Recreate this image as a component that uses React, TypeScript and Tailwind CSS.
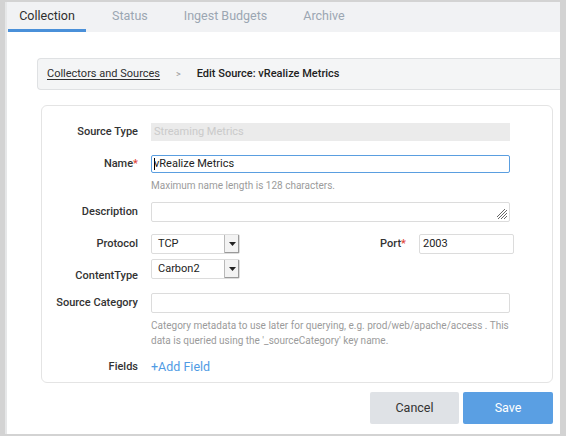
import React from "react";

function Select({ value }: { value: string }) {
  return (
    <div className="flex h-[20px] w-[89px] items-stretch rounded-[2px] border border-[#dcdcdc] bg-white">
      <div className="flex flex-1 items-center pl-[6px] text-[11px] text-[#222]">{value}</div>
      <div className="flex w-[15px] items-center justify-center border-l border-[#b9b9b9] bg-[#f3f3f3] shadow-[inset_-1px_-1px_0_#9a9a9a]">
        <svg width="7" height="4" viewBox="0 0 7 4">
          <path d="M0 0 H7 L3.5 4 Z" fill="#222" />
        </svg>
      </div>
    </div>
  );
}

export default function App() {
  return (
    <div
      className="flex h-[436px] w-[566px] bg-[#d3d3d3] pb-[2px] pl-[5px] pr-[6px] pt-[2px]"
      style={{ fontFamily: "Roboto, 'Noto Sans', sans-serif" }}
    >
      <div className="flex flex-1 flex-col overflow-hidden border-l-[2px] border-[#e6e7e8] bg-white">
        {/* Tabs */}
        <div className="flex h-[30px] shrink-0 items-stretch bg-[#f1f2f4] text-[12.5px]">
          <div className="ml-[1px] flex w-[78px] items-center justify-center border-b-[3px] border-[#4a90d9] pt-[2px] text-[#2e2e2e]">
            Collection
          </div>
          <div className="flex items-center pb-[1px] pl-[26px] text-[#9ba6b2]">Status</div>
          <div className="flex items-center pb-[1px] pl-[36px] text-[#9ba6b2]">Ingest Budgets</div>
          <div className="flex items-center pb-[1px] pl-[36px] text-[#9ba6b2]">Archive</div>
        </div>

        {/* Breadcrumb */}
        <div className="ml-[30px] mt-[26px] flex h-[32px] shrink-0 items-center rounded-l-[4px] border border-r-0 border-[#dfe1e3] bg-[#f4f5f6] pl-[9px] pt-[1px] text-[11px]">
          <span className="text-[#2e2e2e] underline underline-offset-[2px]">Collectors and Sources</span>
          <span className="ml-[16px] text-[9px] text-[#9a9a9a]">&gt;</span>
          <span className="ml-[16px] font-medium text-[#222]">Edit Source: vRealize Metrics</span>
        </div>

        {/* Card */}
        <div className="ml-[34px] mr-[7px] mt-[15px] flex flex-col rounded-[6px] border border-[#e4e4e4] pb-[6px] pt-[17px] text-[11px]">
          {/* Source Type */}
          <div className="flex items-center">
            <div className="w-[96px] text-right font-medium text-[#333]">Source Type</div>
            <div className="ml-[13px] flex h-[18px] w-[359px] items-center bg-[#ebebeb] pl-[3px] text-[#cacaca]">
              Streaming Metrics
            </div>
          </div>
          {/* Name */}
          <div className="mt-[14px] flex items-center">
            <div className="w-[96px] text-right font-medium text-[#333]">
              Name<span className="text-[#e0453a]">*</span>
            </div>
            <div className="ml-[13px] flex h-[18px] w-[359px] items-center rounded-[2px] border border-[#5a9ee0] pl-[2px] text-[#222]">
              <span className="mr-[-1px] inline-block h-[12px] w-[1px] bg-black"></span>
              vRealize Metrics
            </div>
          </div>
          <div className="ml-[109px] mt-[6px] text-[10px] leading-[14px] text-[#9b9b9b]">
            Maximum name length is 128 characters.
          </div>
          {/* Description */}
          <div className="mt-[9px] flex items-center">
            <div className="w-[96px] text-right font-medium text-[#333]">Description</div>
            <div className="relative ml-[13px] h-[20px] w-[359px] rounded-[2px] border border-[#dcdcdc]">
              <svg className="absolute bottom-[1px] right-[1px]" width="12" height="12" viewBox="0 0 12 12">
                <path d="M11 2 L2 11 M11 5 L5 11 M11 8 L8 11 M9 1 L1 9" stroke="#666" strokeWidth="1" />
              </svg>
            </div>
          </div>
          {/* Protocol + Port */}
          <div className="mt-[12px] flex items-center">
            <div className="w-[96px] text-right font-medium text-[#333]">Protocol</div>
            <div className="ml-[13px]">
              <Select value="TCP" />
            </div>
            <div className="ml-[122px] w-[44px] text-right font-medium text-[#333]">
              Port<span className="text-[#e0453a]">*</span>
            </div>
            <div className="ml-[13px] flex h-[20px] w-[95px] items-center rounded-[2px] border border-[#dcdcdc] pl-[3px] text-[#222]">
              2003
            </div>
          </div>
          {/* ContentType */}
          <div className="mt-[5px] flex items-end">
            <div className="mb-[-5px] w-[96px] text-right font-medium text-[#333]">ContentType</div>
            <div className="ml-[13px]">
              <Select value="Carbon2" />
            </div>
          </div>
          {/* Source Category */}
          <div className="mt-[14px] flex items-center">
            <div className="w-[96px] text-right font-medium text-[#333]">Source Category</div>
            <div className="ml-[13px] h-[20px] w-[359px] rounded-[2px] border border-[#dcdcdc]"></div>
          </div>
          <div className="ml-[109px] mt-[5px] w-[362px] text-[10px] leading-[15px] text-[#9b9b9b]">
            Category metadata to use later for querying, e.g. prod/web/apache/access . This data is queried using the '_sourceCategory' key name.
          </div>
          {/* Fields */}
          <div className="mt-[10px] flex items-center">
            <div className="w-[96px] text-right font-medium text-[#333]">Fields</div>
            <div className="ml-[13px] text-[12.5px] leading-[18px] text-[#4f9be4]">+Add Field</div>
          </div>
        </div>

        {/* Buttons */}
        <div className="mr-[7px] mt-[9px] flex justify-end gap-[4px]">
          <div className="flex h-[32px] w-[89px] items-center justify-center rounded-[2px] bg-[#dfe2e6] text-[12.5px] text-[#333]">
            Cancel
          </div>
          <div className="flex h-[32px] w-[90px] items-center justify-center rounded-[2px] bg-[#5a9fe3] text-[12.5px] text-white">
            Save
          </div>
        </div>
      </div>
    </div>
  );
}
